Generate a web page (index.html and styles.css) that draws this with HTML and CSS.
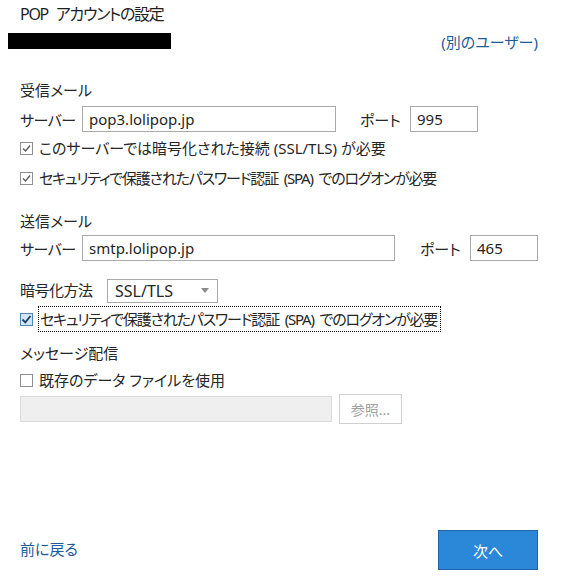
FILE: index.html
```html
<!DOCTYPE html>
<html lang="ja">
<head>
    <meta charset="UTF-8">
    <meta name="viewport" content="width=device-width, initial-scale=1.0">
    <title>POP アカウントの設定</title>
    <link rel="stylesheet" href="styles.css">
</head>
<body>
    <div class="dialog">
        <h1 class="title">POP アカウントの設定</h1>

        <div class="user-row">
            <span class="redacted"></span>
            <a class="link" href="#">(別のユーザー)</a>
        </div>

        <div class="group-title incoming">受信メール</div>
        <div class="field-row first">
            <label class="field-label">サーバー</label>
            <input class="text-input server-in" type="text" value="pop3.lolipop.jp">
            <label class="port-label">ポート</label>
            <input class="text-input port" type="text" value="995">
        </div>
        <div class="check-row c1">
            <span class="box checked"><svg viewBox="0 0 13 13" width="13" height="13"><path d="M3 6.5 L5.5 9 L10 3.5" fill="none" stroke="#5a5a5a" stroke-width="1.3"/></svg></span>
            <span class="check-text">このサーバーでは暗号化された接続 (SSL/TLS) が必要</span>
        </div>
        <div class="check-row c2">
            <span class="box checked"><svg viewBox="0 0 13 13" width="13" height="13"><path d="M3 6.5 L5.5 9 L10 3.5" fill="none" stroke="#5a5a5a" stroke-width="1.3"/></svg></span>
            <span class="check-text tight">セキュリティで保護されたパスワード認証 (SPA) でのログオンが必要</span>
        </div>

        <div class="group-title outgoing">送信メール</div>
        <div class="field-row second">
            <label class="field-label">サーバー</label>
            <input class="text-input server-out" type="text" value="smtp.lolipop.jp">
            <label class="port-label wide">ポート</label>
            <input class="text-input port" type="text" value="465">
        </div>
        <div class="field-row enc">
            <label class="field-label enc-label">暗号化方法</label>
            <div class="select">
                <span>SSL/TLS</span>
                <span class="arrow"></span>
            </div>
        </div>
        <div class="check-row c3">
            <span class="box focused"><svg viewBox="0 0 13 13" width="13" height="13"><path d="M2.5 6.5 L5.3 9.3 L10.5 3" fill="none" stroke="#1d3f6b" stroke-width="1.8"/></svg></span>
            <span class="check-text tight focus">セキュリティで保護されたパスワード認証 (SPA) でのログオンが必要</span>
        </div>

        <div class="group-title delivery">メッセージ配信</div>
        <div class="check-row c4">
            <span class="box"></span>
            <span class="check-text">既存のデータ ファイルを使用</span>
        </div>
        <div class="file-row">
            <input class="text-input file-path" type="text" disabled>
            <button class="browse" disabled>参照...</button>
        </div>

        <div class="footer">
            <a class="link back" href="#">前に戻る</a>
            <button class="next">次へ</button>
        </div>
    </div>
</body>
</html>
```

FILE: styles.css
```css
body {
    margin: 0;
    background: #fff;
    color: #262626;
    font-family: "Noto Sans", "Noto Sans CJK JP", sans-serif;
    font-size: 15px;
    font-feature-settings: "palt";
}
.dialog {
    height: 586px;
    display: flex;
    flex-direction: column;
    padding: 0 20px;
    box-sizing: border-box;
}
.title {
    margin: 0;
    font-size: 16px;
    font-weight: normal;
    line-height: 28px;
    letter-spacing: -1.3px;
    word-spacing: 5px;
    color: #1f1f1f;
}
.user-row {
    display: flex;
    align-items: center;
    justify-content: space-between;
    height: 22px;
    margin: 2px 4px 0 -12px;
}
.redacted {
    width: 163px;
    height: 16px;
    background: #000;
}
.link {
    color: #1c5c98;
    text-decoration: none;
}
.group-title {
    line-height: 20px;
}
.incoming { margin-top: 28px; }
.outgoing { margin-top: 23px; }
.delivery { margin-top: 11px; }

.field-row {
    display: flex;
    align-items: center;
    height: 26px;
}
.field-row.first { margin-top: 6px; }
.field-row.second { margin-top: 4px; }
.field-row.enc { margin-top: 16px; height: 24px; }
.field-label {
    width: 62px;
    flex: none;
    letter-spacing: -0.5px;
}
.enc-label { width: 87px; }
.text-input {
    box-sizing: border-box;
    height: 26px;
    border: 1px solid #a9a9a9;
    padding: 0 6px;
    font: inherit;
    font-family: "Noto Sans", sans-serif;
    font-size: 15px;
    color: #1f1f1f;
    outline: none;
}
.server-in { width: 254px; }
.server-out { width: 313px; }
.port-label {
    margin-left: 24px;
    width: 50px;
}
.port-label.wide { margin-left: 25px; }
.port { width: 68px; }

.select {
    box-sizing: border-box;
    width: 111px;
    height: 24px;
    border: 1px solid #a9a9a9;
    display: flex;
    align-items: center;
    justify-content: space-between;
    padding: 0 6px 0 7px;
    font-family: "Noto Sans", sans-serif;
    font-size: 16px;
    margin-top: 3px;
}
.arrow {
    width: 0;
    height: 0;
    border-left: 4px solid transparent;
    border-right: 4px solid transparent;
    border-top: 5px solid #8a8a8a;
    margin-right: 2px;
}

.check-row {
    display: flex;
    align-items: center;
    height: 20px;
}
.c1 { margin-top: 6px; }
.c2 { margin-top: 10px; }
.c3 { margin-top: 5px; height: 26px; }
.c4 { margin-top: 7px; }
.box {
    box-sizing: border-box;
    width: 13px;
    height: 13px;
    border: 1px solid #8f8f8f;
    background: #fff;
    flex: none;
    display: flex;
    align-items: center;
    justify-content: center;
}
.box svg {
    flex: none;
}
.box.focused {
    border-color: #4f86b8;
    background: #d3e6f6;
}
.check-text {
    margin-left: 6px;
    line-height: 20px;
    white-space: nowrap;
}
.check-text.tight {
    letter-spacing: -1.2px;
    word-spacing: 3px;
}
.check-text.focus {
    box-sizing: border-box;
    height: 26px;
    line-height: 24px;
    border: 1px dotted #000;
    padding: 0 3px 0 1px;
    margin-left: 5px;
}

.file-row {
    display: flex;
    align-items: center;
    margin-top: 4px;
    height: 30px;
}
.file-path {
    width: 312px;
    height: 26px;
    background: #efefef;
    border-color: #dcdcdc;
}
.browse {
    margin-left: 7px;
    width: 63px;
    height: 30px;
    background: #fff;
    border: 1px solid #d0d0d0;
    color: #a0a0a0;
    font: inherit;
    font-size: 14px;
    padding: 0;
}

.footer {
    margin-top: auto;
    margin-bottom: 16px;
    display: flex;
    align-items: center;
    justify-content: space-between;
    height: 40px;
    margin-right: 4px;
}
.back {
    margin-top: -4px;
}
.next {
    width: 100px;
    height: 40px;
    background: #2b88d8;
    border: 1px solid #1f64a8;
    color: #fff;
    font: inherit;
    font-size: 15px;
    cursor: pointer;
}
```
